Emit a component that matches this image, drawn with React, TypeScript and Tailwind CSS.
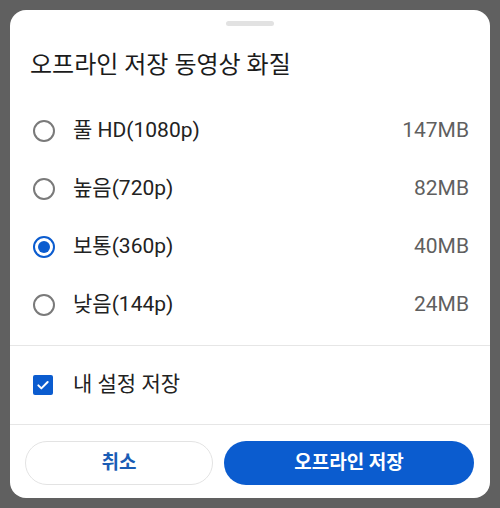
import React, { useState } from 'react';

const OPTIONS = [
  { id: 'fhd', label: '풀 HD(1080p)', size: '147MB' },
  { id: 'high', label: '높음(720p)', size: '82MB' },
  { id: 'mid', label: '보통(360p)', size: '40MB' },
  { id: 'low', label: '낮음(144p)', size: '24MB' },
];

const font = { fontFamily: '"Roboto", "Noto Sans CJK KR", sans-serif' };

export default function App() {
  const [selected, setSelected] = useState('mid');
  const [remember, setRemember] = useState(true);

  return (
    <div className="w-[500px] h-[508px] bg-[#606060] p-[10px]" style={font}>
      <div className="h-[488px] bg-white rounded-[16px] flex flex-col overflow-hidden">
        {/* drag handle */}
        <div className="mt-[11px] mx-auto w-[48px] h-[5px] rounded-full bg-[#e2e2e2]" />

        <h2 className="mt-[24px] pl-[20px] text-[24px] leading-[30px] text-[#1b1b1b] font-normal">
          오프라인 저장 동영상 화질
        </h2>

        <div className="mt-[22px] pb-[11px]">
          {OPTIONS.map((o) => {
            const on = selected === o.id;
            return (
              <button
                key={o.id}
                onClick={() => setSelected(o.id)}
                className="w-full h-[58px] flex items-center pl-[23px] pr-[21px] text-left"
              >
                <span
                  className={`w-[22px] h-[22px] rounded-full border-2 flex items-center justify-center shrink-0 ${
                    on ? 'border-[#0b5ccf]' : 'border-[#7a7a7a]'
                  }`}
                >
                  {on && <span className="w-[12px] h-[12px] rounded-full bg-[#0b5ccf]" />}
                </span>
                <span className="ml-[18px] text-[21px] text-[#222] flex-1">{o.label}</span>
                <span className="text-[21px] text-[#5f5f5f]">{o.size}</span>
              </button>
            );
          })}
        </div>

        <div className="h-px bg-[#e6e6e6]" />

        <button
          onClick={() => setRemember(!remember)}
          className="h-[78px] flex items-center pl-[23px] text-left"
        >
          <span
            className={`w-[20px] h-[20px] rounded-[2px] flex items-center justify-center ${
              remember ? 'bg-[#0b5ccf]' : 'border-2 border-[#7a7a7a]'
            }`}
          >
            {remember && (
              <svg viewBox="0 0 24 24" className="w-[16px] h-[16px]" fill="none" stroke="white" strokeWidth="3" strokeLinecap="round" strokeLinejoin="round">
                <path d="M5 12.5l4.5 4.5L19 7.5" />
              </svg>
            )}
          </span>
          <span className="ml-[20px] text-[21px] text-[#222]">내 설정 저장</span>
        </button>

        <div className="h-px bg-[#e6e6e6]" />

        <div className="mt-[16px] flex gap-[11px] pl-[15px] pr-[16px]">
          <button className="w-[188px] h-[44px] rounded-full border border-[#e3e3e3] text-[19px] font-bold text-[#1a5cb5]">
            취소
          </button>
          <button className="flex-1 h-[44px] rounded-full bg-[#0b5ccf] text-[19px] font-semibold text-white">
            오프라인 저장
          </button>
        </div>
      </div>
    </div>
  );
}
